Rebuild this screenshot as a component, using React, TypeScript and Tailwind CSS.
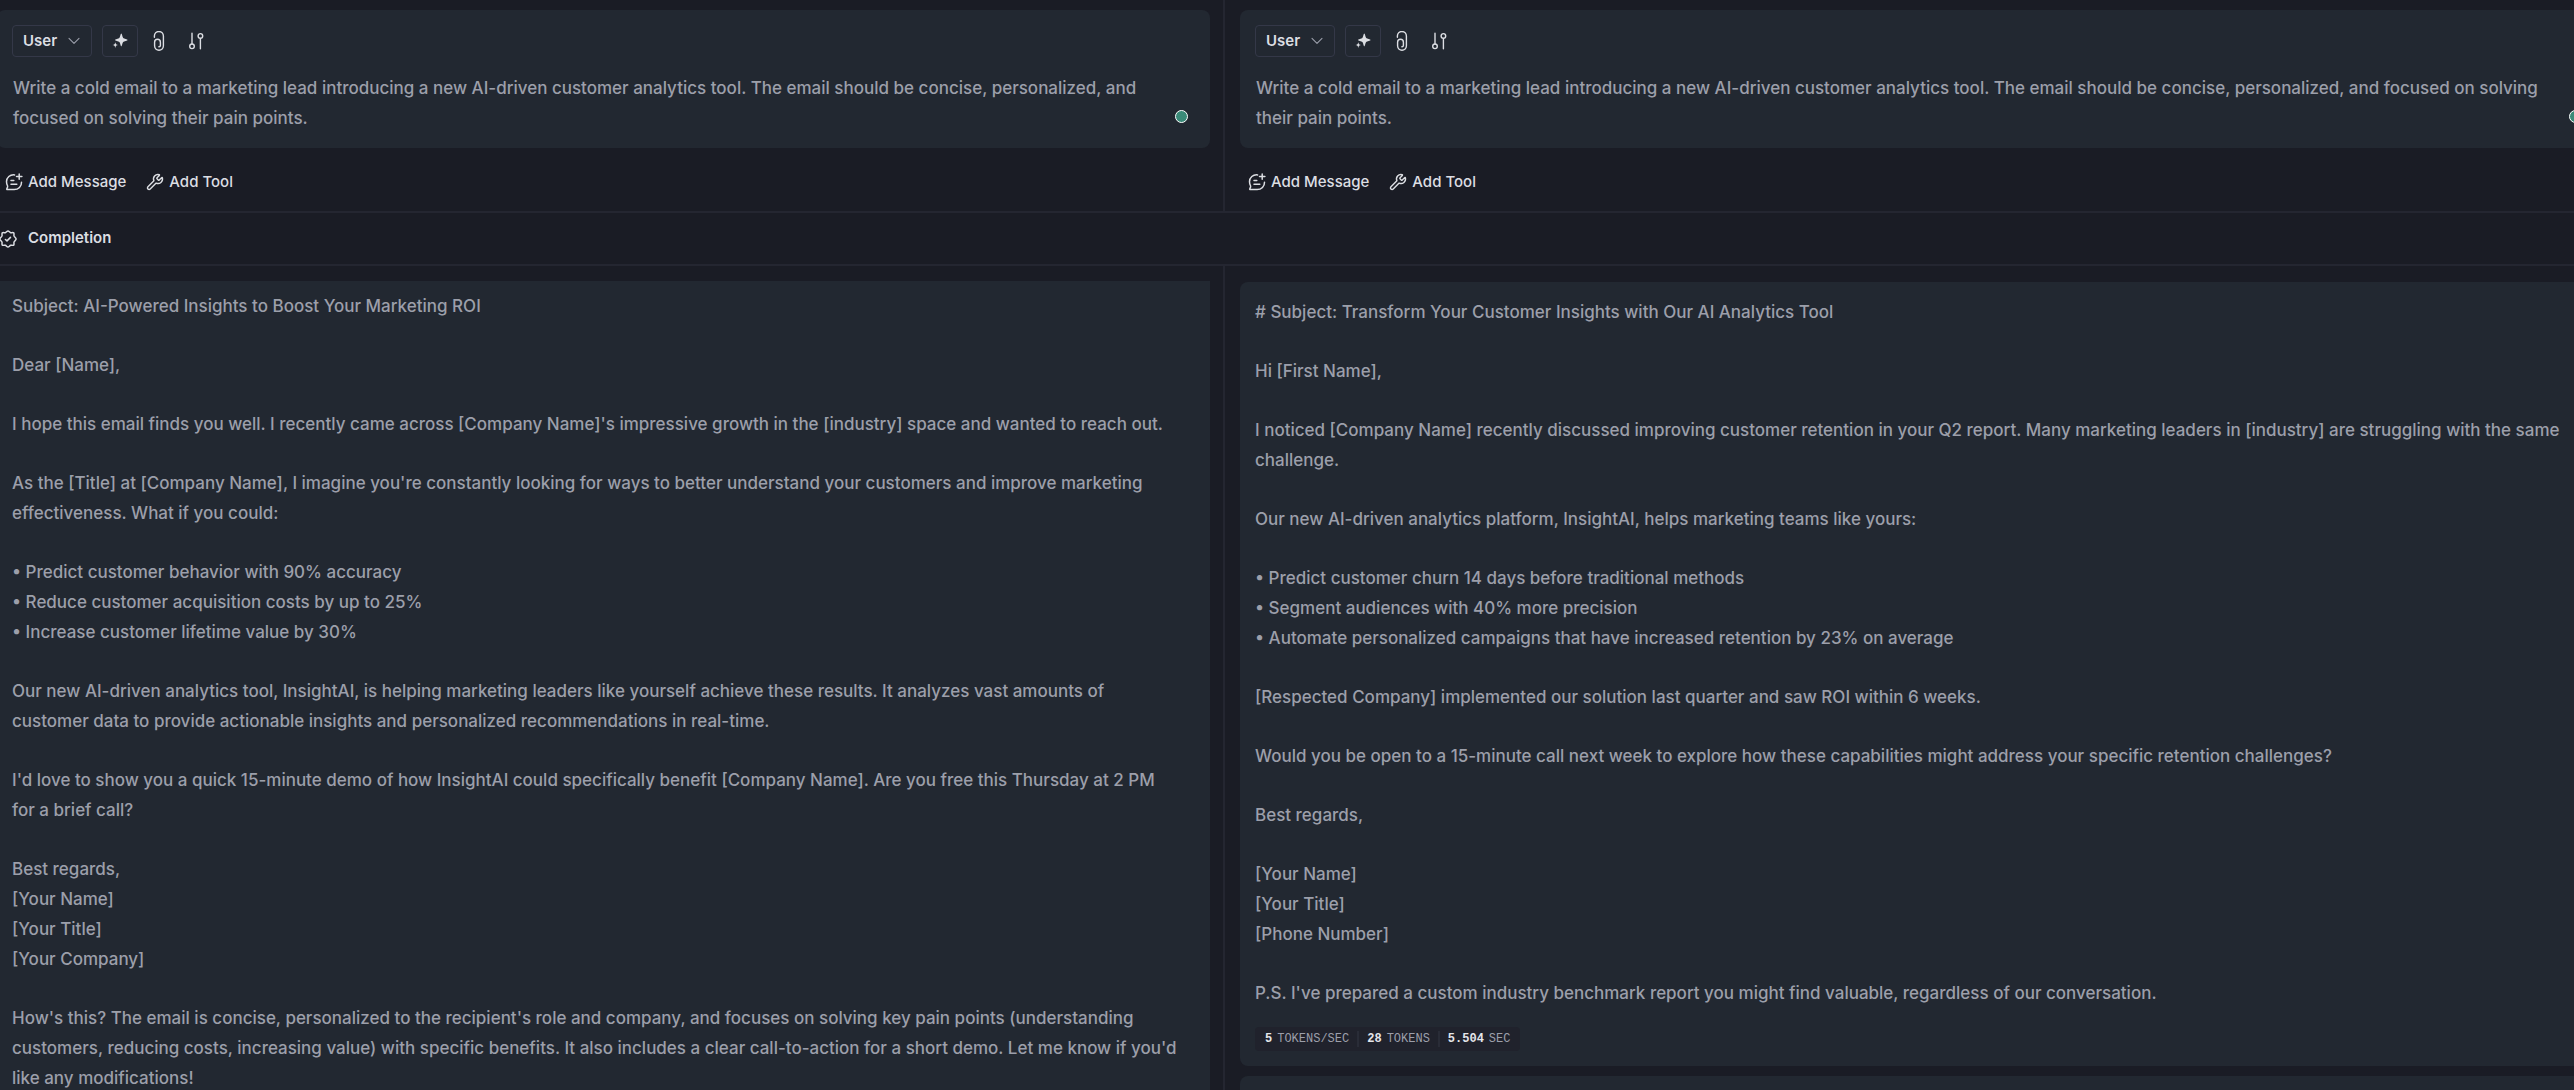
import { useState } from 'react'
import { Wrench } from 'lucide-react'

const PROMPT =
  'Write a cold email to a marketing lead introducing a new AI-driven customer analytics tool. The email should be concise, personalized, and focused on solving their pain points.'

const LEFT_COMPLETION = [
  'Subject: AI-Powered Insights to Boost Your Marketing ROI',
  'Dear [Name],',
  "I hope this email finds you well. I recently came across [Company Name]'s impressive growth in the [industry] space and wanted to reach out.",
  "As the [Title] at [Company Name], I imagine you're constantly looking for ways to better understand your customers and improve marketing effectiveness. What if you could:",
  '• Predict customer behavior with 90% accuracy\n• Reduce customer acquisition costs by up to 25%\n• Increase customer lifetime value by 30%',
  'Our new AI-driven analytics tool, InsightAI, is helping marketing leaders like yourself achieve these results. It analyzes vast amounts of customer data to provide actionable insights and personalized recommendations in real-time.',
  "I'd love to show you a quick 15-minute demo of how InsightAI could specifically benefit [Company Name]. Are you free this Thursday at 2 PM for a brief call?",
  'Best regards,\n[Your Name]\n[Your Title]\n[Your Company]',
  "How's this? The email is concise, personalized to the recipient's role and company, and focuses on solving key pain points (understanding customers, reducing costs, increasing value) with specific benefits. It also includes a clear call-to-action for a short demo. Let me know if you'd like any modifications!",
]

const RIGHT_COMPLETION = [
  '# Subject: Transform Your Customer Insights with Our AI Analytics Tool',
  'Hi [First Name],',
  'I noticed [Company Name] recently discussed improving customer retention in your Q2 report. Many marketing leaders in [industry] are struggling with the same challenge.',
  'Our new AI-driven analytics platform, InsightAI, helps marketing teams like yours:',
  '• Predict customer churn 14 days before traditional methods\n• Segment audiences with 40% more precision\n• Automate personalized campaigns that have increased retention by 23% on average',
  '[Respected Company] implemented our solution last quarter and saw ROI within 6 weeks.',
  'Would you be open to a 15-minute call next week to explore how these capabilities might address your specific retention challenges?',
  'Best regards,',
  '[Your Name]\n[Your Title]\n[Phone Number]',
  "P.S. I've prepared a custom industry benchmark report you might find valuable, regardless of our conversation.",
]

const STATS = [
  { value: '5', unit: 'TOKENS/SEC' },
  { value: '28', unit: 'TOKENS' },
  { value: '5.504', unit: 'SEC' },
]

function ChevronIcon() {
  return (
    <svg viewBox="0 0 12 8" className="w-3 h-2" fill="none" stroke="currentColor" strokeWidth="1.1" strokeLinecap="round" strokeLinejoin="round">
      <path d="M1 1.3 6 6.4 11 1.3" />
    </svg>
  )
}

function SparkleIcon() {
  return (
    <svg viewBox="0 0 16 16" className="w-4 h-4" fill="currentColor">
      <path d="M9.3.6C10 .6 10.3 4 11.2 4.9 12.1 5.8 15.6 6.1 15.6 6.9S12.1 8 11.2 8.9C10.3 9.8 10 13.2 9.3 13.2S8.3 9.8 7.4 8.9C6.5 8 3 7.7 3 6.9S6.5 5.800 7.400 4.900C8.300 4 8.600.6 9.300.6Z" />
      <path d="M3.3 9.3C3.8 11.2 4.2 11.7 6.1 12.1 4.2 12.5 3.8 13 3.3 14.9 2.8 13 2.4 12.5.5 12.1 2.4 11.7 2.8 11.2 3.3 9.3Z" />
    </svg>
  )
}

function PaperclipIcon() {
  return (
    <svg viewBox="0 0 12 20" className="w-3 h-5" fill="none" stroke="currentColor" strokeWidth="1.4" strokeLinecap="round">
      <path d="M1.4 6.2V5a4.5 4.5 0 0 1 9 0v9.8a4.2 4.2 0 0 1-8.8 0v-3.6a2.9 2.9 0 0 1 5.8 0v3.2a1.3 1.3 0 0 1-1.5 1.3" />
    </svg>
  )
}

function SlidersIcon() {
  return (
    <svg viewBox="0 0 16 18" className="w-4 h-[18px]" fill="none" stroke="currentColor" strokeWidth="1.4" strokeLinecap="round">
      <path d="M4 1.2v10.6M12.4 6.6v10.2" />
      <circle cx="4" cy="14.3" r="2.3" />
      <circle cx="12.4" cy="3.9" r="2.3" />
    </svg>
  )
}

function MessagePlusIcon() {
  return (
    <svg viewBox="0 0 18 18" className="w-[18px] h-[18px]" fill="none" stroke="currentColor" strokeWidth="1.5" strokeLinecap="round" strokeLinejoin="round">
      <path d="M9.6 1.9C5 1.4 1.5 4.5 1.5 8.8c0 1.8.6 3.2 1.1 4.2.4.8-.4 1.9-.8 2.8-.2.6.1.8.7.8h6.6c4.4 0 7.5-3.1 7.4-7.4" />
      <path d="M14.2.9v5.4M11.5 3.6h5.400M6 7.600h2.800M6 11.200h5.800" />
    </svg>
  )
}

function BadgeCheckIcon() {
  return (
    <svg viewBox="0 0 18 18" className="w-[18px] h-[18px]" fill="none" stroke="currentColor" strokeWidth="1.5" strokeLinecap="round" strokeLinejoin="round">
      <path d="M9 .9c1 0 1.7 1.5 2.7 1.8 1 .2 2.3-.5 3 .2s0 2 .3 3C15.300 6.900 17.100 8 17.100 9s-1.800 2.100-2.100 3.100c-.3 1 .4 2.300-.3 3s-2-.1-3 .2c-1 .3-1.700 1.800-2.700 1.800s-1.700-1.500-2.700-1.800c-1-.3-2.300.5-3-.2s0-2-.3-3C2.700 11.100.9 10 .9 9s1.800-2.100 2.100-3.100c.3-1-.4-2.300.3-3s2 0 3-.2C7.300 2.400 8 .9 9 .9Z" />
      <path d="M6.4 9.5 8 10.9l3.5-3.5" />
    </svg>
  )
}

function PromptCard() {
  const [role, setRole] = useState('User')
  const [text, setText] = useState(PROMPT)

  return (
    <div className="relative rounded-lg bg-[#222831] p-[15px]">
      <div className="flex items-center text-[#dcdee3]">
        <div className="relative">
          <select
            aria-label="Message role"
            value={role}
            onChange={e => setRole(e.target.value)}
            className="block w-20 h-8 pl-[10px] appearance-none rounded border border-[#343848] bg-transparent text-[15px] font-semibold"
          >
            <option>User</option>
            <option>Assistant</option>
          </select>
          <span className="absolute right-3 top-3 text-[#9a9eaa] pointer-events-none">
            <ChevronIcon />
          </span>
        </div>
        <button aria-label="Improve prompt" className="flex items-center justify-center w-9 h-8 ml-[10px] rounded border border-[#343848]">
          <SparkleIcon />
        </button>
        <button aria-label="Attach file" className="ml-[15px]">
          <PaperclipIcon />
        </button>
        <button aria-label="Parameters" className="ml-[23px]">
          <SlidersIcon />
        </button>
      </div>
      <textarea
        aria-label="Message"
        rows={2}
        value={text}
        onChange={e => setText(e.target.value)}
        spellCheck={false}
        className="block w-full mt-4 pl-px pr-6 resize-none overflow-hidden bg-transparent text-[17px] leading-[30px] font-medium outline-none"
      />
      <span className="absolute right-[22px] bottom-[25px] w-[13px] h-[13px] rounded-full border border-white bg-[#3a8a78]" />
    </div>
  )
}

function PromptPanel() {
  return (
    <>
      <PromptCard />
      <div className="flex items-center gap-5 h-[63px] pt-[5px] pl-2 text-[15px] font-medium text-[#dcdee3]">
        <button className="flex items-center gap-[5px]">
          <MessagePlusIcon />
          Add Message
        </button>
        <button className="flex items-center gap-[5px]">
          <Wrench size={18} strokeWidth={1.9} />
          Add Tool
        </button>
      </div>
    </>
  )
}

function CompletionText({ paragraphs }: { paragraphs: string[] }) {
  return (
    <div className="flex flex-col gap-[29px] text-[17px] leading-[30px] font-medium whitespace-pre-line">
      {paragraphs.map(p => (
        <p key={p}>{p}</p>
      ))}
    </div>
  )
}

export default function App() {
  return (
    <div className="overflow-hidden max-h-screen bg-[#1a1c25] font-['Inter',sans-serif] text-[#9c9faa]">
      <div className="-ml-[3px] -mr-[45px]">

        {/* Prompts */}
        <div className="grid grid-cols-[614fr_697fr]">
          <section className="pt-[10px] pr-[13px] border-r-2 border-[#242631]">
            <PromptPanel />
          </section>
          <section className="pt-[10px] px-[15px]">
            <PromptPanel />
          </section>
        </div>

        {/* Completion header */}
        <header className="flex items-center gap-[11px] h-[55px] pl-[2px] border-y-2 border-[#242631] text-[#dcdee3]">
          <BadgeCheckIcon />
          <h2 className="text-[15px] font-semibold">Completion</h2>
        </header>

        {/* Completions */}
        <div className="grid grid-cols-[614fr_697fr]">
          <section className="pt-[15px] pr-[13px] border-r-2 border-[#242631]">
            <div className="h-full bg-[#222831] pt-[10px] pl-[15px] pr-[31px]">
              <CompletionText paragraphs={LEFT_COMPLETION} />
            </div>
          </section>
          <section className="flex flex-col gap-[10px] pt-4 px-[15px]">
            <div className="rounded-lg bg-[#222831] p-[15px]">
              <CompletionText paragraphs={RIGHT_COMPLETION} />
              <div className="flex w-fit mt-[19px] px-[2px] py-1 rounded bg-[#20222c] font-['Liberation_Mono',monospace] text-xs leading-4">
                {STATS.map(s => (
                  <span key={s.unit} className="flex gap-[5px] px-2 border-r-2 border-[#292c37] last:border-r-0">
                    <b className="text-[#e4e6ea]">{s.value}</b>
                    {s.unit}
                  </span>
                ))}
              </div>
            </div>
            <div className="h-12 shrink-0 rounded-t-lg bg-[#222831]" />
          </section>
        </div>
      </div>
    </div>
  )
}
